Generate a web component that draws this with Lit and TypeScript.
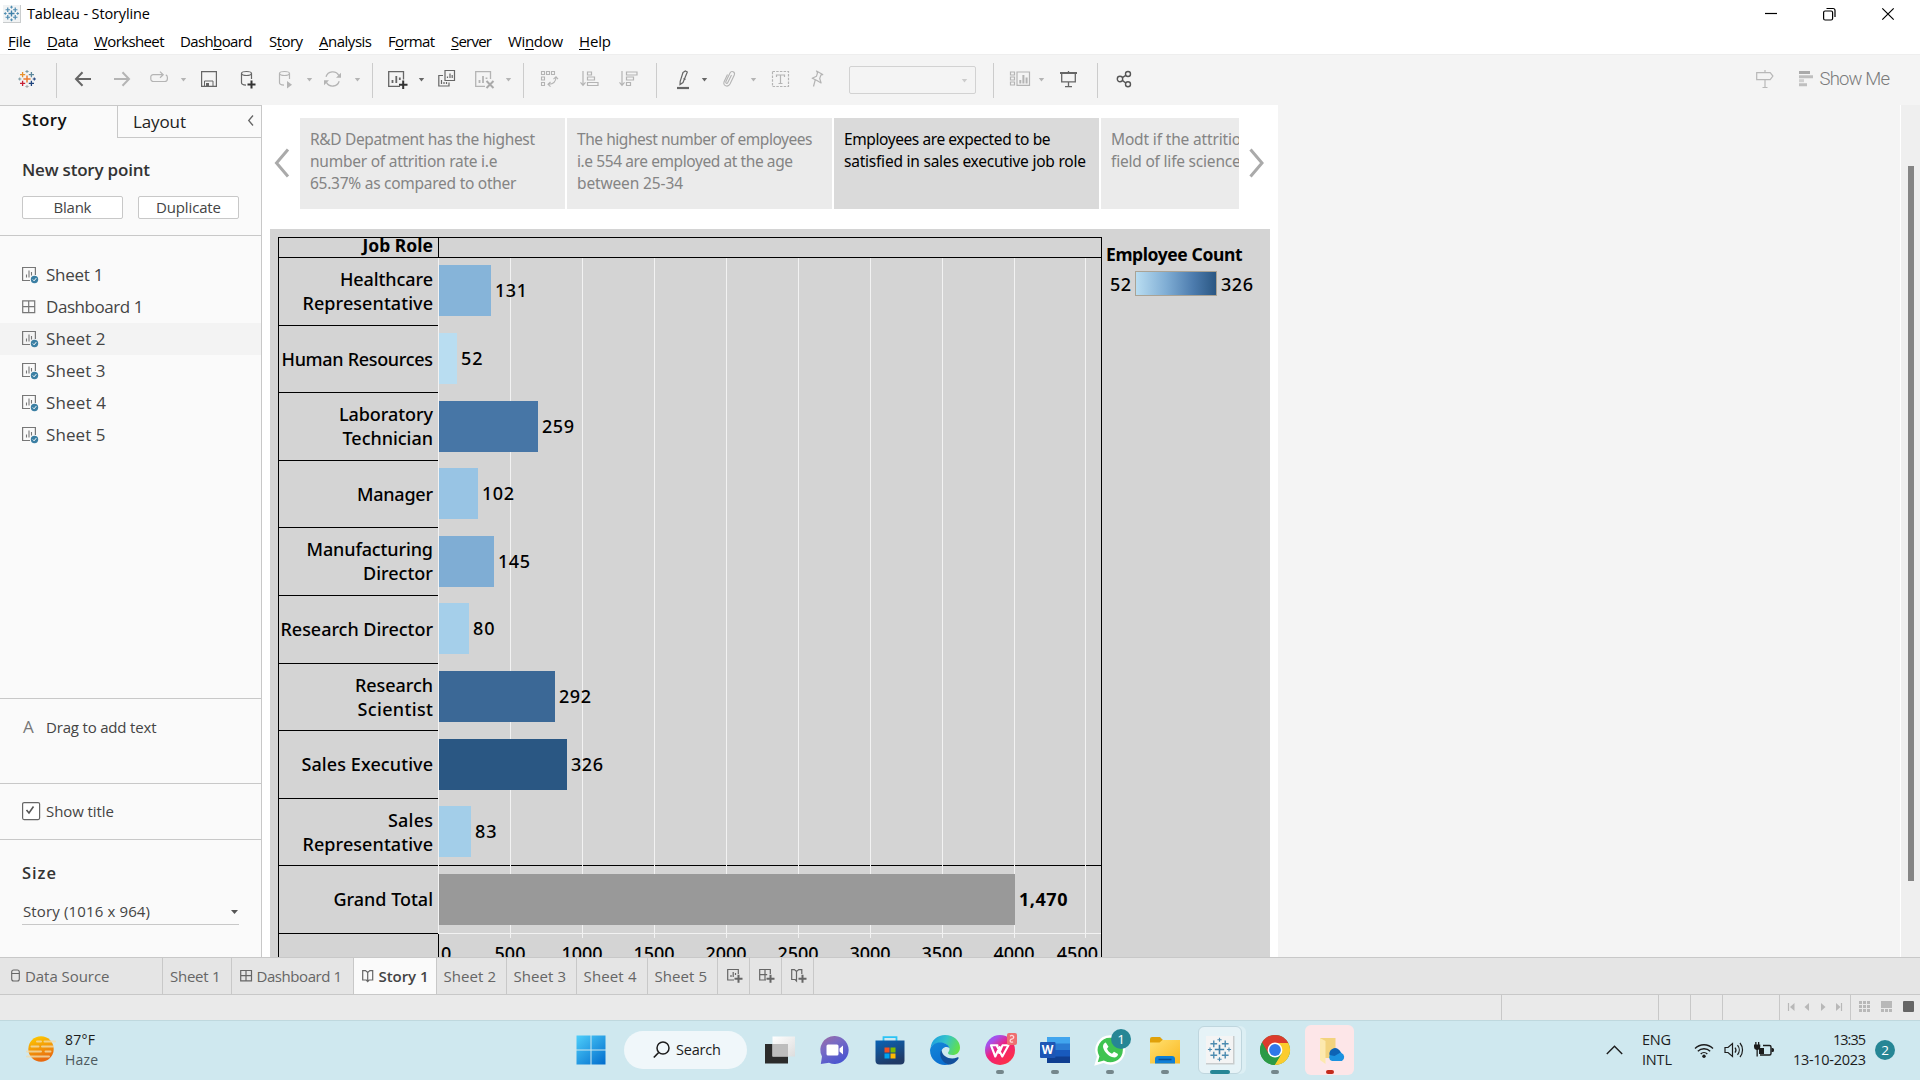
import { LitElement, html, svg, css, nothing, TemplateResult } from "lit";
import { customElement, property, query } from "lit/decorators.js";
import { classMap } from "lit/directives/class-map.js";
import { styleMap } from "lit/directives/style-map.js";

/** A single-line label whose tracking is adjusted so that it spans a given width. */
@customElement("fit-text")
class FitText extends LitElement {
  static styles = css`
    :host { display: inline-block; white-space: nowrap; flex: none; }
    .inner { display: inline-block; }
  `;
  @property({ type: Number }) w = 0;
  @query(".inner") inner!: HTMLElement;
  firstUpdated() {
    const n = (this.textContent ?? "").trim().length;
    const natural = this.inner.getBoundingClientRect().width;
    if (!this.w || n < 2) return;
    const gap = (this.w - natural) / (n - 1);
    this.inner.style.letterSpacing = `${gap}px`;
    this.inner.style.marginRight = `${-gap}px`;
  }
  render() {
    return html`<span class="inner"><slot></slot></span>`;
  }
}

const D = "#666";
const L = "#b4b4b4";

const icon = (w: number, h: number, body: unknown) =>
  html`<svg class="ic" width=${w} height=${h} viewBox="0 0 ${w} ${h}" fill="none">${body}</svg>`;

const plusAt = (x: number, y: number, r: number, c: string, sw: number) =>
  svg`<path d="M${x - r} ${y}h${2 * r}M${x} ${y - r}v${2 * r}" stroke=${c} stroke-width=${sw}/>`;

const tableauMark = (k: number, colors: string[], sw: number) => {
  const c = k / 2;
  const u = k / 20;
  return svg`
    ${plusAt(c, c, 3.6 * u, colors[0], sw * 1.15)}
    ${plusAt(c - 4.4 * u, c - 4.4 * u, 2.6 * u, colors[1], sw)}
    ${plusAt(c + 4.4 * u, c - 4.4 * u, 2.6 * u, colors[2], sw)}
    ${plusAt(c - 4.4 * u, c + 4.4 * u, 2.6 * u, colors[3], sw)}
    ${plusAt(c + 4.4 * u, c + 4.4 * u, 2.6 * u, colors[4], sw)}
    ${plusAt(c, c - 7.5 * u, 1.6 * u, colors[5], sw * 0.8)}
    ${plusAt(c, c + 7.5 * u, 1.6 * u, colors[6], sw * 0.8)}
    ${plusAt(c - 7.3 * u, c, 1.6 * u, colors[5], sw * 0.8)}
    ${plusAt(c + 7.3 * u, c, 1.6 * u, colors[4], sw * 0.8)}`;
};
const blues = ["#3f7fa8", "#4d8bb0", "#4d8bb0", "#4d8bb0", "#4d8bb0", "#4d8bb0", "#4d8bb0"];

const caret = (c: string) => icon(7, 20, svg`<path d="M.8 9h5.400L3.500 12.400z" fill=${c}/>`);
const sep = html`<span class="sep"></span>`;

const toolbar: TemplateResult[] = [
  icon(20, 20, tableauMark(20, ["#eb7b30", "#e8912c", "#5b879b", "#c72035", "#1f447e", "#7b9ba6", "#a7a9ab"], 1.3)),
  sep,
  icon(20, 20, svg`<path d="M16 10H1.500M7.500 3.200 1 10 7.500 16.800" stroke=${D} stroke-width="2"/>`),
  icon(20, 20, svg`<path d="M0 10h14.500M8.500 3.200 15 10 8.500 16.800" stroke=${L} stroke-width="2"/>`),
  icon(20, 20, svg`<path d="M12 5.7H3.300A2.400 2.400 0 0 0 .8 8.400v1.500a2.600 2.600 0 0 0 2.600 2.600h11.200a2.800 2.800 0 0 0 2.800-2.800V8.400a2.600 2.600 0 0 0-1.600-2.500M10 2.600l3.200 3.100L10 8.800" stroke=${L} stroke-width="1.200"/>`),
  caret(L),
  icon(20, 20, svg`<path d="M1.600 2.600h14.800v14.800H1.600z" stroke=${D} stroke-width="1.200"/><path d="M4.500 17v-5h8.500v5" stroke=${D}/><path d="M6 14h3v3H6z" fill=${D}/>`),
  icon(20, 20, svg`<ellipse cx="6.500" cy="4.500" rx="5" ry="2" stroke=${D} stroke-width="1.200"/><path d="M1.500 4.500v9.300c0 1.400 2 2.200 4.500 2.300M11.500 4.500V10" stroke=${D} stroke-width="1.200"/><path d="M7.500 15.500h8M11.500 11.500v8" stroke="#333" stroke-width="2"/>`),
  icon(20, 20, svg`<ellipse cx="6.500" cy="4.500" rx="5" ry="2" stroke=${L} stroke-width="1.200"/><path d="M1.500 4.500v9.300c0 1.400 2 2.200 4.500 2.300M11.500 4.500V10" stroke=${L} stroke-width="1.200"/><path d="M9 12l5 3.700-5 3.700z" fill=${L}/>`),
  caret(L),
  icon(20, 20, svg`<path d="M2 7.800A7 7 0 0 1 14.900 6.600M15.200 12.200A7 7 0 0 1 2.400 13.400" stroke=${L} stroke-width="1.300"/><path d="M17 3.800v5h-5zM0 16.200v-5h5z" fill=${L}/>`),
  caret(L),
  sep,
  icon(20, 20, svg`<path d="M12 17.400H.7V2.600h14.800v8" stroke=${D} stroke-width="1.300"/><path d="M4.500 14v-3M8.300 14V7M11.800 11V8.500" stroke=${D} stroke-width="1.800"/><path d="M11 15.700h8.500M15.200 11.500v8.500" stroke="#333" stroke-width="2"/>`),
  caret(D),
  icon(20, 20, svg`<path d="M7 1.500h9.500v10H7z" stroke=${D} stroke-width="1.200"/><path d="M9.500 9V7.500M12 9V4.500M14.200 9V6" stroke=${D} stroke-width="1.200"/><path d="M5 6.500H.8V17H11v-3.500M3.500 15v-4M6 15v-2M8.500 15v-2" stroke=${D} stroke-width="1.200"/>`),
  icon(20, 20, svg`<path d="M10 17.400H.7V2.600h14.800V10" stroke=${L} stroke-width="1.300"/><path d="M4.500 14v-3M8 14V7M11.500 10V8.500" stroke=${L} stroke-width="1.800"/><path d="M11.500 12l7 7M18.500 12l-7 7" stroke="#aaa" stroke-width="2"/>`),
  caret(L),
  sep,
  icon(20, 20, svg`<g stroke=${L} stroke-width="1.100"><path d="M1.500 2.500h3v3h-3zM6.500 2.500h3v3h-3zM11.500 2.500h3v3h-3zM1.500 8h3v3h-3zM1.500 13.500h3v3h-3zM16 8c0 5-2.500 7-7.500 7.300M13.500 10.200 16 7.700l2 2.500M10.500 13 8 15.300l2.500 2.400"/></g>`),
  icon(20, 20, svg`<g stroke=${L} stroke-width="1.200"><path d="M4 2v14M1.500 13.400 4 16.300l2.500-2.900M8.500 3h4v3h-4zM8.500 8h7v3h-7zM8.500 13.500H19v3H8.500z"/></g>`),
  icon(20, 20, svg`<g stroke=${L} stroke-width="1.200"><path d="M4 2v14M1.500 13.400 4 16.300l2.500-2.900M8.500 3H19v3H8.500zM8.500 8h7v3h-7zM8.500 13.500h4v3h-4z"/></g>`),
  sep,
  icon(20, 20, svg`<path d="M7 3.500 9.300 2l2 1-4.300 10.500-3 2 .200-3.200zM7.500 9.500l2 1" stroke=${D} stroke-width="1.200"/><path d="M1 19h12" stroke=${D} stroke-width="2.200"/>`),
  caret(D),
  icon(20, 20, svg`<path d="M9.500 6 5.800 13.500c-.7 1.500-2.500.8-2-.8L8 4c1.300-2.600 5.500-1.300 4.300 2L8 15c-2 3.700-7.500 2-5.900-2.300L5.500 5.500" stroke=${L} stroke-width="1.100"/>`),
  caret(L),
  icon(20, 20, svg`<path d="M1.500 2.500h16v15h-16z" stroke=${L} stroke-width="1.200" stroke-dasharray="2.500 1.200"/><path d="M5.500 8V6h8v2M9.500 6v8.500M7.500 14.500h4" stroke=${L} stroke-width="1.200"/>`),
  icon(20, 20, svg`<path d="M6.500 2l6.200 3.600-1.700.3-1.300 3.600 1.400 4.400L6.500 11.300l-4.300-2.100 4.300-2 1-3.400zM5.200 11 3.500 17.500" stroke=${L} stroke-width="1.200" stroke-linejoin="round"/>`),
  html`<span class="combo">${caret("#ccc")}</span>`,
  sep,
  icon(22, 20, svg`<path d="M1.500 3h4v3h-4zM1.500 8h4v3h-4zM1.500 13h4v3h-4zM8 3h12.500v13.300H8z" stroke=${L} stroke-width="1.200"/><path d="M11.300 14.500V11M14.400 14.500V6M17.600 14.500V8.500" stroke=${L} stroke-width="2"/>`),
  caret(L),
  icon(20, 20, svg`<path d="M1 4h17" stroke=${D} stroke-width="2"/><path d="M9.500 2v2M2.700 4.500v8.300h13.600V4.500M9.500 13v4.500M6 17.600h7" stroke=${D} stroke-width="1.300"/>`),
  sep,
  icon(20, 20, svg`<g stroke="#555" stroke-width="1.400"><circle cx="4" cy="10" r="2.700"/><circle cx="12" cy="5" r="2.500"/><circle cx="12" cy="15.300" r="2.500"/><path d="M6.300 8.600 9.800 6.300M6.300 11.400 9.800 14"/></g>`),
  icon(20, 20, svg`<path d="M10 1v2.500M1.700 3.700h13.500l2.700 3.400-2.700 3.500H1.700zM10 11v7.500M7.500 18.500h5" stroke="#b8b8b8" stroke-width="1.200"/>`),
  html`<span class="showme">${icon(15, 20, svg`<path d="M0 2h11v3H0z" fill="#aaa"/><path d="M0 6.200h14v3H0zM0 14.200h8v3H0z" fill="#bfbfbf"/><path d="M0 10.200h5v3H0z" fill="#d0d0d0"/>`)}<fit-text w="70.500">Show Me</fit-text></span>`,
];

const menus: [string, string, string, number][] = [
  ["", "F", "ile", 23], ["", "D", "ata", 31.500], ["", "W", "orksheet", 70.500], ["Dash", "b", "oard", 72.500],
  ["S", "t", "ory", 34], ["", "A", "nalysis", 53], ["F", "o", "rmat", 47], ["", "S", "erver", 41],
  ["Wi", "n", "dow", 55], ["", "H", "elp", 32],
];

const sheetIcon = icon(17, 20, svg`<path d="M8 15.500H.6V2.500h12.800V10" stroke="#777" stroke-width="1.200"/><path d="M4.500 12.500v-3M7 12.500V5.500M9.500 10.500V7" stroke="#777" stroke-width="1.100"/><circle cx="12.500" cy="14.500" r="3.700" fill="#3b7fa3"/><path d="M10.800 14.500l1.300 1.300 2.200-2.700" stroke="#fff"/>`);
const dashIcon = icon(17, 20, svg`<path d="M.7 3.800h12v11.800H.7zM6.700 3.800v11.800M.7 9.700h12" stroke="#777" stroke-width="1.200"/>`);

const points: { lines: [string, number][]; active?: boolean }[] = [
  { lines: [["R&D Depatment has the highest", 225], ["number of attrition rate i.e", 187.500], ["65.37% as compared to other", 206.500]] },
  { lines: [["The highest number of employees", 235.500], ["i.e 554 are employed at the age", 216], ["between 25-34", 106]] },
  { lines: [["Employees are expected to be", 206.500], ["satisfied in sales executive job role", 242]], active: true },
  { lines: [["Modt if the attrition is in the", 199], ["field of life sciences", 137]] },
];

interface Row { h: number; top: number; label: [string, number][]; value: string; vw: number; bar: number; color: string; bold?: boolean }
const rows: Row[] = [
  { h: 68, top: 7, label: [["Healthcare", 93], ["Representative", 130.500]], value: "131", vw: 32, bar: 52, color: "#86b4d9" },
  { h: 67, top: 7, label: [["Human Resources", 151.500]], value: "52", vw: 21.500, bar: 18, color: "#b9ddf1" },
  { h: 68, top: 8, label: [["Laboratory", 94], ["Technician", 90.500]], value: "259", vw: 32, bar: 99, color: "#4776a6" },
  { h: 67, top: 7, label: [["Manager", 76]], value: "102", vw: 32, bar: 39, color: "#98c4e4" },
  { h: 68, top: 8, label: [["Manufacturing", 126.500], ["Director", 70]], value: "145", vw: 32, bar: 55, color: "#7fadd4" },
  { h: 68, top: 7, label: [["Research Director", 152.500]], value: "80", vw: 21.500, bar: 30, color: "#a5cfea" },
  { h: 67, top: 7, label: [["Research", 78], ["Scientist", 75.500]], value: "292", vw: 32, bar: 116, color: "#3b6896" },
  { h: 68, top: 8, label: [["Sales Executive", 131.500]], value: "326", vw: 32, bar: 128, color: "#2a5783" },
  { h: 67, top: 7, label: [["Sales", 45], ["Representative", 130.500]], value: "83", vw: 21.500, bar: 32, color: "#a3cee9" },
  { h: 68, top: 8, label: [["Grand Total", 99.500]], value: "1,470", vw: 48.500, bar: 576, color: "#999999", bold: true },
];
const grid = [0, 72, 144, 216, 288, 360, 432, 504, 576, 647];

const bookIcon = svg`<path d="M5.700 4.500v9M5.700 13.500 4.300 12H.7V2.600h2.800l2.200 1.900 2.200-1.900h2.800V12H7.100z" stroke="#666" stroke-width="1.200"/>`;
const plus = svg`<path d="M7.500 11.800h8M11.500 7.800v8" stroke="#666" stroke-width="2"/>`;

const tabs: { icon?: TemplateResult; text?: string; w?: number; active?: boolean }[] = [
  { icon: icon(10, 16, svg`<rect x=".7" y="2" width="7.600" height="11" rx="2" stroke="#666" stroke-width="1.100"/><path d="M.7 5.500h7.600" stroke="#666"/>`), text: "Data Source", w: 84.500 },
  { text: "Sheet 1", w: 50.500 },
  { icon: icon(13, 16, svg`<path d="M.7 2.500h10.800v10.300H.7zM6 2.500v10.300M.7 7.600h10.800" stroke="#666" stroke-width="1.200"/>`), text: "Dashboard 1", w: 85.500 },
  { icon: icon(13, 16, bookIcon), text: "Story 1", w: 50, active: true },
  { text: "Sheet 2", w: 52.500 },
  { text: "Sheet 3", w: 52.500 },
  { text: "Sheet 4", w: 53 },
  { text: "Sheet 5", w: 52.500 },
  { icon: icon(16, 18, svg`<path d="M7 13H.7V2.500h10.600V7M4 10V8M6.200 10V5M8.500 8V6" stroke="#666" stroke-width="1.200"/>${plus}`) },
  { icon: icon(16, 18, svg`<path d="M7 13H.7V2.500h10.600V7M6 2.500V13M.7 7.700h7.500" stroke="#666" stroke-width="1.200"/>${plus}`) },
  { icon: icon(16, 18, svg`<path d="M5.500 4.500v9.500L4.200 12.500H.7V2.600h2.700l2.100 1.900 2.300-1.900h3V7" stroke="#666" stroke-width="1.200"/>${plus}`) },
];

const apps: { art: TemplateResult; state?: "run" | "active" | "alert"; badge?: string }[] = [
  { art: icon(30, 30, svg`<defs><linearGradient id="tv" x1="0" y1="0" x2="1" y2="1"><stop stop-color="#fff"/><stop offset="1" stop-color="#ddd"/></linearGradient></defs><path d="M0 9h23v19.500H0z" fill="#2b2b2b"/><path d="M7.500 1.500H30v20H7.500z" fill="url(#tv)"/><path d="M7.500 9H23v12.500H7.500z" fill="#bdbdbd"/>`) },
  { art: icon(30, 30, svg`<defs><linearGradient id="ch" x1="0" y1="0" x2=".6" y2="1"><stop stop-color="#a06aa0"/><stop offset=".4" stop-color="#7a6cc4"/><stop offset="1" stop-color="#4a55d0"/></linearGradient></defs><path d="M15 1a14 14 0 1 1-6 26.800L.8 29 2 21.500A14 14 0 0 1 15 1z" fill="url(#ch)"/><rect x="6.500" y="9.500" width="12" height="11" rx="1.500" fill="#fff"/><path d="M19.500 13.500l3.500-3v9l-3.500-3z" fill="#fff"/>`) },
  { art: icon(30, 30, svg`<defs><linearGradient id="st" x1="0" y1="0" x2=".4" y2="1"><stop stop-color="#0a63b5"/><stop offset="1" stop-color="#213a66"/></linearGradient></defs><path d="M8.500 7V2.200h13V7" stroke="#2cc3f5" stroke-width="1.800"/><path d="M.5 5.500h29v20a4 4 0 0 1-4 4h-21a4 4 0 0 1-4-4z" fill="url(#st)"/><path d="M9.500 12.500h5v5h-5z" fill="#f25022"/><path d="M15.500 12.500h5v5h-5z" fill="#7fba00"/><path d="M9.500 18.500h5v5h-5z" fill="#00a4ef"/><path d="M15.500 18.500h5v5h-5z" fill="#ffb900"/>`) },
  { art: icon(30, 30, svg`<defs><linearGradient id="e1" x1="0" y1=".2" x2="1" y2=".5"><stop stop-color="#1b9de2"/><stop offset=".5" stop-color="#35c4c9"/><stop offset="1" stop-color="#62e04b"/></linearGradient><linearGradient id="e2" x1="0" y1="0" x2=".5" y2="1"><stop stop-color="#1488d8"/><stop offset="1" stop-color="#0b6fd0"/></linearGradient></defs><path d="M.5 13C1.500 5 7.500 0 15 0c9 0 15 6 15 12.500 0 5-3.500 7.500-7.500 7.500-3 0-4.500-1-4.500-2 0-1.200 1.500-1.500 1.500-4C19.500 11 16 8 11 8 6 8 2 10 .5 13z" fill="url(#e1)"/><path d="M0 15C.8 10 5.500 7.500 10 7.500c5 0 9 2.500 9.500 5.500-4-2.500-8.500.5-8.500 5.500 0 6 4.500 10.500 9 10.500-8 3.500-20-2-20-14z" fill="url(#e2)"/><path d="M11.500 15c-3 4-.5 12.500 7 14.500 4 .3 8-2.500 10-6 .5-1-.5-1.500-1.500-1-6 2.500-14.500 0-15.500-7.500z" fill="#124f9c"/>`) },
  { art: icon(30, 30, svg`<defs><linearGradient id="wp" x1="0" y1="0" x2=".8" y2="1"><stop stop-color="#8a5cff"/><stop offset=".25" stop-color="#a84fe8"/><stop offset=".5" stop-color="#f01f7a"/><stop offset="1" stop-color="#ff3340"/></linearGradient></defs><circle cx="15" cy="15" r="15" fill="url(#wp)"/><path d="M12.500 10.300H6L10.300 21.500 14.600 12M11.500 10.300 17.300 21.500 23.500 10.300H17.500L14.200 18" stroke="#fff" stroke-width="2.100" stroke-linejoin="round" stroke-linecap="round"/><rect x="22" y="-2" width="10" height="12" rx="2" fill="#ee6f70"/><path d="M25 1.200c2.500-2 5 .5 3 2.300l-2 .8c-2 1.500 0 3.700 2 2.500" stroke="#ffd9d9" stroke-width="1.300"/>`), state: "run" },
  { art: icon(30, 30, svg`<path d="M7 2h23v7H7z" fill="#41a5ee"/><path d="M7 8.500h23v7H7z" fill="#2b7cd3"/><path d="M7 15h23v7H7z" fill="#185abd"/><path d="M7 21.500h23V28H7z" fill="#103f91"/><rect x="0" y="7" width="15.500" height="16" rx="1" fill="#1d56b5"/><text x="7.500" y="19.300" text-anchor="middle" class="wlogo">W</text>`), state: "run" },
  { art: icon(30, 30, svg`<path d="M15.500 1.500a13.500 13.500 0 1 1-6.700 25.200L1 29l2.200-7.500A13.500 13.500 0 0 1 15.500 1.500z" fill="#3fc351" stroke="#fff" stroke-width="2.400"/><path d="M10.800 7.500c-2 .5-3.300 3-2.500 5.500 1.500 4.500 5 8 9.700 9.300 2.500.6 5-.8 5-3.300l-4-2.200-2 2c-2.500-1-4.200-2.800-5-5l1.500-2z" fill="#fff"/>`), state: "run", badge: "1" },
  { art: icon(30, 30, svg`<defs><linearGradient id="fo" x1="0" y1="0" x2="1" y2="1"><stop stop-color="#ffe070"/><stop offset="1" stop-color="#fbb820"/></linearGradient></defs><path d="M0 4a2 2 0 0 1 2-2h8l3 3h15v8H0z" fill="#e0a10a"/><path d="M0 7.500h9.500L12.500 5H30v23.500H0z" fill="url(#fo)"/><path d="M5 28.500V24a3 3 0 0 1 3-3h14a3 3 0 0 1 3 3v4.500z" fill="#0f7fd6"/><path d="M8.500 24.500h13" stroke="#0a4f93" stroke-width="1.500"/>`), state: "run" },
  { art: icon(30, 30, svg`<path d="M1 1h28.500v28.500H1z" fill="#c9cccd"/><path d="M1 1h27v27H1z" fill="#f4f4f4"/><g transform="translate(1.500 1.500)">${tableauMark(26, blues, 1.400)}</g>`), state: "active" },
  { art: icon(30, 30, svg`<circle cx="15" cy="15" r="15" fill="#2b9a46"/><path d="M2 7.500A15 15 0 0 1 28.200 8H15l-6.300 11z" fill="#db3b2d"/><path d="M28 7.500A15 15 0 0 1 14.500 30L21.500 18.500 15 8h13.200z" fill="#fbcc2e"/><path d="M2 7.500 8.500 19A7.300 7.300 0 0 0 21.500 18.700L14.700 30A15 15 0 0 1 2 7.500z" fill="#2b9a46"/><circle cx="15" cy="15" r="7.400" fill="#fff"/><circle cx="15" cy="15" r="5.900" fill="#2f78ea"/>`), state: "run" },
  { art: icon(30, 30, svg`<path d="M5 3h15.500v20H5z" fill="#f3d37e"/><path d="M5 3l5.500 3v23L5 25z" fill="#fde9ae"/><path d="M17 26a4 4 0 0 1-.5-7.500 5.500 5.500 0 0 1 10-.5 4.500 4.500 0 0 1 .5 8z" fill="#1b92e0"/><path d="M14.500 20a5.500 5.500 0 0 1 11-2.500l-6 3.500z" fill="#0d63b5"/>`), state: "alert" },
];

@customElement("app-root")
class AppRoot extends LitElement {
  static styles = css`
    :host { display: block; width: 1920px; height: 1080px; overflow: hidden; background: #f4f4f4; color: #000;
      font-family: "Open Sans", "Noto Sans", sans-serif; font-size: 15px; line-height: 20px; }
    * { box-sizing: border-box; }
    svg { display: block; flex: none; overflow: visible; }
    .page { display: grid; grid-template-rows: 54px 51px 852px 38px 25px 60px; height: 1080px; }

    .head { background: #fff; display: grid; grid-template-rows: 29px 25px; }
    .title { display: flex; align-items: center; padding: 0 26px 1px 3px; font-size: 14.500px; }
    .title fit-text { margin-left: 6px; flex: 1; }
    .winbtns { display: flex; gap: 46px; }
    .menus { display: grid; grid-template-columns: 39px 47px 86px 89px 50px 69px 63px 57px 71px 40px; padding-left: 8px; align-items: center; font-size: 15px; padding-bottom: 1px; }
    u { text-underline-offset: 2px; text-decoration-thickness: 1px; text-decoration-skip-ink: none; }

    .toolbar { background: #f4f4f4; border-top: 1px solid #eee; padding: 0 0 2px 17px; display: grid; align-items: center; justify-items: start; font-family: Roboto, sans-serif;
      grid-template-columns: 39px 19px 39px 36px 30px 20px 40px 38px 28px 18px 30px 18px 16px 30px 20px 37px 30px 18px 17px 39px 39px 38px 20px 25px 21px 28px 21px 39px 39px 144px 16px 29px 21px 38px 19px 639px 44px 110px; }
    .sep { width: 1px; height: 35px; background: #ccc; margin-top: 2px; }
    .combo { width: 127px; height: 28px; border: 1px solid #d2d2d2; border-radius: 2px; display: flex; justify-content: flex-end; align-items: center; padding-right: 7px; margin-top: 2px; }
    .showme { display: flex; align-items: center; gap: 5.500px; color: #7b7b7b; font-size: 18.500px; font-weight: 300; }

    .body { display: grid; grid-template-columns: 262px 1016px 622px 20px; min-height: 0; overflow: hidden; }
    .side { background: #fafafa; border-right: 1px solid #c8c8c8; border-top: 1px solid #c8c8c8; color: #444; display: grid; grid-template-rows: 130px 463px 85px 56px 1fr; }
    .side > section { border-bottom: 1px solid #c8c8c8; }
    .side > section:last-child { border-bottom: 0; }
    .sidetabs { display: grid; grid-template-columns: 117px 1fr; height: 32px; }
    .st-a { padding: 4px 0 0 22px; font-size: 17px; font-weight: 600; color: #111; }
    .st-b { border-left: 1px solid #c8c8c8; border-bottom: 1px solid #c8c8c8; padding: 0 6px 0 15px; font-size: 17px; color: #222; display: flex; align-items: center; justify-content: space-between; }
    .st-b svg { margin-top: -2px; }
    .nsp { padding: 22px 0 0 22px; font-size: 17px; font-weight: 600; color: #333; }
    .btns { display: flex; gap: 15px; padding: 16px 0 0 22px; }
    .btn { width: 101px; height: 23px; border: 1px solid #c8c8c8; border-radius: 2px; background: #fff; display: flex; align-items: center; justify-content: center; font-size: 15px; padding-bottom: 1px; }
    .sheets { padding-top: 23px; }
    .sheet { height: 32px; display: flex; align-items: center; gap: 7px; padding-left: 22px; font-size: 17px; }
    .sheet.hover { background: #f3f3f3; }
    .line { display: flex; align-items: center; padding: 0 0 2px 22px; font-size: 15px; gap: 6px; }
    .line.drag { align-items: flex-start; padding-top: 18px; }
    .drag .a { width: 18px; padding-left: 1px; font-size: 17px; color: #777; }
    .size { padding: 23px 0 0 22px; }
    .size h4 { margin: 0; font-size: 16.500px; font-weight: 600; color: #333; line-height: 20px; }
    .select { width: 217px; height: 28px; margin-top: 14px; border-bottom: 1px solid #c8c8c8; display: flex; align-items: center; justify-content: space-between; font-size: 15px; padding: 1px 1px 0; }

    .story { background: #fff; padding: 13px 8px 0; display: grid; grid-template-rows: 91px 728px; row-gap: 20px; min-height: 0; overflow: hidden; font-family: "Noto Sans", sans-serif; }
    .nav { display: grid; grid-template-columns: 30px 939px 31px; align-items: center; }
    .nav > svg { justify-self: start; margin-top: -1px; }
    .points { display: flex; gap: 2px; overflow: hidden; height: 91px; }
    .point { flex: none; width: 265px; background: #ebebeb; color: #848484; padding: 10px 0 0 10px; font-size: 15.500px; line-height: 22px; display: flex; flex-direction: column; align-items: flex-start; }
    .point.on { background: #dadada; color: #000; }
    .dash { background: #d4d4d4; padding: 8px 0 0 8px; display: grid; grid-template-columns: 824px 1fr; overflow: hidden; }
    .chart { border: 1px solid #000; border-bottom: 0; height: 720px; overflow: hidden; font-size: 18px; font-weight: 500; line-height: 24px; display: grid; grid-template-rows: 20px 676px 24px; }
    .chead { display: grid; grid-template-columns: 160px 1fr; border-bottom: 1px solid #000; font-weight: 700; font-size: 17.500px; line-height: 14px; text-align: right; }
    .chead div { border-right: 1px solid #000; padding-right: 5px; height: 19px; }
    .chead div:last-child { border-right: 0; }
    .cbody { display: grid; grid-template-columns: 159px 1fr; }
    .lab { border-bottom: 1px solid #000; display: flex; flex-direction: column; justify-content: center; align-items: flex-end; padding: 0 5px 1px 0; }
    .panel { position: relative; }
    .gridlines { position: absolute; left: 0; top: 0; }
    .row { position: relative; display: flex; align-items: flex-start; padding-left: 1px; gap: 4px; }
    .bar { height: 51px; flex: none; }
    .val { line-height: 51px; }
    .val.b { font-weight: 700; }
    .axis { display: grid; grid-template-columns: 159px 36px repeat(8, 72px) 1fr; justify-items: center; line-height: 24px; padding-top: 7px; height: 24px; overflow: hidden; }
    .axis .z { justify-self: stretch; border-left: 1px solid #000; margin-top: -7px; padding: 7px 0 0 2px; }
    .axis .last { justify-self: end; padding-right: 3px; }
    .axis span { white-space: nowrap; }
    .legend { padding: 5px 0 0 4px; font-size: 18px; font-weight: 500; }
    .legend .t { font-weight: 700; font-size: 17.500px; line-height: 24px; }
    .ramp { display: flex; align-items: center; gap: 4px; padding-left: 4px; margin-top: 5px; }
    .ramp i { width: 82px; height: 25px; border: 1px solid #aaa395; background: linear-gradient(90deg, #b9ddf1, #7fadd4 38%, #4c7bad 72%, #2a5783); }
    .scroll { background: #efefef; border-left: 1px solid #fff; padding: 61px 0 0 7px; grid-column: 4; }
    .scroll i { display: block; width: 6px; height: 715px; background: #858585; }

    .tabs { background: #e5e5e5; border-top: 1px solid #c8c8c8; border-bottom: 1px solid #c8c8c8; display: grid; color: #666; font-size: 15px;
      grid-template-columns: 163px 69px 122px 83px 70px 70px 71px 70px 32px 32px 32px; }
    .tab { border-right: 1px solid #c8c8c8; display: flex; align-items: center; gap: 4px; padding: 0 0 1px 6.500px; }
    .tab:first-child { padding-left: 11px; }
    .tab:nth-child(2) { padding-left: 7px; }
    .tab:nth-child(3), .tab:nth-child(4) { padding-left: 7.500px; }
    .tab.on { background: #fafafa; font-weight: 600; color: #444; }
    .tab:nth-child(n + 9) { padding-left: 9px; }

    .status { background: #eaeaea; display: grid; grid-template-columns: 1502px 157px 32px 32px 57px 71px 69px; }
    .status > div { border-right: 1px solid #c8c8c8; display: flex; align-items: center; }
    .status > div:last-child { border: 0; }
    .status .media { gap: 9px; padding: 0 0 2px 8px; }
    .status .views { gap: 11px; padding: 0 0 2px 8px; }

    .taskbar { background: #cfe8ef; border-top: 1px solid #bfd8de; display: grid; grid-template-columns: 563px 55px 134px 605px 1fr; font-size: 14px; color: #1c1c1c; align-items: center; padding-bottom: 1px; }
    .weather { display: flex; gap: 7px; padding-left: 26px; align-items: center; }
    .weather svg { margin-top: -2px; }
    .weather .sub { color: #4d5a5e; }
    .two { display: grid; line-height: 20px; }
    .start { justify-self: center; }
    .pill { margin-left: 6px; width: 123px; height: 38px; border-radius: 19px; background: #f0f7fa; display: flex; align-items: center; gap: 6px; padding-left: 29px; font-size: 14.500px; }
    .apps { display: flex; }
    .app { width: 55px; height: 50px; position: relative; display: grid; place-items: center; }
    .tile { width: 49px; height: 50px; border-radius: 6px; display: grid; place-items: center; }
    .active .tile { background: #e6f3f7; border: 1px solid #bfd6de; width: 44px; height: 48px; box-shadow: 4px 0 0 #dceff4; }
    .alert .tile { background: #fde6e8; }
    .dot { position: absolute; bottom: 1px; left: 23.500px; width: 8px; height: 4px; border-radius: 2px; background: #74868b; }
    .active .dot { width: 20px; left: 17.500px; background: #268695; }
    .alert .dot { background: #c42b1c; }
    .badge { position: absolute; left: 29px; top: 4px; }
    .round { width: 20px; height: 20px; border-radius: 50%; background: #268695; color: #fff; font-size: 13.500px; line-height: 20px; text-align: center; }
    .wlogo { font: 700 12px "Open Sans", sans-serif; fill: #fff; }
    .tray { display: grid; grid-template-columns: 36px 52px 30px 30px 39px 73px 50px; padding-left: 249px; align-items: center; font-size: 14.500px; }
    .two.r { justify-items: end; }
    .tray .round { margin-left: 9px; }
  `;

  private header() {
    return html`<header class="head">
      <div class="title">
        ${icon(18, 18, svg`<path d="M0 0h18v18H0z" fill="#c9cccd"/><path d="M0 0h17v17H0z" fill="#f1f3f4"/>${tableauMark(17, blues, 1.200)}`)}
        <fit-text w="123">Tableau - Storyline</fit-text>
        <div class="winbtns">
          ${icon(12, 14, svg`<path d="M0 6.500h12" stroke="#000" stroke-width="1.200"/>`)}
          ${icon(13, 14, svg`<rect x=".6" y="4" width="9" height="9" rx="1.500" stroke="#000" stroke-width="1.200"/><path d="M3.500 1.500H10A2 2 0 0 1 12 3.500V10" stroke="#000" stroke-width="1.200"/>`)}
          ${icon(12, 14, svg`<path d="M.3 1.300l11.400 11.400M11.700 1.300.3 12.700" stroke="#000" stroke-width="1.200"/>`)}
        </div>
      </div>
      <nav class="menus">${menus.map(([a, k, b, w]) => html`<fit-text w=${w}>${a}<u>${k}</u>${b}</fit-text>`)}</nav>
    </header>`;
  }

  private sidebar() {
    const list: [string, number][] = [["Sheet 1", 57.500], ["Dashboard 1", 97.500], ["Sheet 2", 59.500], ["Sheet 3", 59.500], ["Sheet 4", 60], ["Sheet 5", 59.500]];
    return html`<aside class="side">
      <section>
        <div class="sidetabs">
          <div class="st-a"><fit-text w="44.500">Story</fit-text></div>
          <div class="st-b"><fit-text w="53">Layout</fit-text>${icon(8, 14, svg`<path d="M6 1.500 1.700 6.500 6 11.500" stroke="#666" stroke-width="1.300"/>`)}</div>
        </div>
        <div class="nsp"><fit-text w="128">New story point</fit-text></div>
        <div class="btns">
          <div class="btn"><fit-text w="38">Blank</fit-text></div>
          <div class="btn"><fit-text w="65">Duplicate</fit-text></div>
        </div>
      </section>
      <section class="sheets">${list.map(([t, w]) => html`
        <div class=${classMap({ sheet: true, hover: t === "Sheet 2" })}>${t.startsWith("Dash") ? dashIcon : sheetIcon}<fit-text w=${w}>${t}</fit-text></div>`)}
      </section>
      <section class="line drag"><span class="a">A</span><fit-text w="110.500">Drag to add text</fit-text></section>
      <section class="line">${icon(18, 20, svg`<rect x=".6" y="1.600" width="17" height="17" rx="1.500" fill="#fff" stroke="#666" stroke-width="1.200"/><path d="M4.500 9l2.500 3 4.500-6.500" stroke="#555" stroke-width="1.600"/>`)}<fit-text w="68">Show title</fit-text></section>
      <section class="size">
        <h4><fit-text w="34">Size</fit-text></h4>
        <div class="select"><fit-text w="127">Story (1016 x 964)</fit-text>${icon(7, 10, svg`<path d="M0 4h7L3.500 8z" fill="#555"/>`)}</div>
      </section>
    </aside>`;
  }

  private chart() {
    return html`<div class="chart">
      <div class="chead"><div><fit-text w="70.500">Job Role</fit-text></div><div></div></div>
      <div class="cbody">
        <div>${rows.map(r => html`<div class="lab" style=${styleMap({ height: r.h + "px" })}>${r.label.map(([t, w]) => html`<fit-text w=${w}>${t}</fit-text>`)}</div>`)}</div>
        <div class="panel">
          <svg class="gridlines" width="663" height="680" shape-rendering="crispEdges">
            <path d="M0 607.500h663" stroke="#000"/>
            <path d="M0 675.500h663" stroke="#f2f2f2"/>
            ${grid.map(x => svg`<path d="M${x + 0.5} 0V${x ? 680 : 676}" stroke="#f2f2f2"/>`)}
          </svg>
          ${rows.map(r => html`<div class="row" style=${styleMap({ height: r.h + "px", paddingTop: r.top + "px" })}>
            <div class="bar" style=${styleMap({ width: r.bar + "px", background: r.color })}></div>
            <div class=${classMap({ val: true, b: !!r.bold })}><fit-text w=${r.vw}>${r.value}</fit-text></div>
          </div>`)}
        </div>
      </div>
      <div class="axis">
        <span></span><span class="z">0</span>
        ${[500, 1000, 1500, 2000, 2500, 3000, 3500, 4000].map(v => html`<span>${v}</span>`)}
        <span class="last">4500</span>
      </div>
    </div>`;
  }

  private taskbar() {
    return html`<footer class="taskbar">
      <div class="weather">
        ${icon(32, 30, svg`<defs><linearGradient id="sun" x1="0" y1="0" x2=".3" y2="1"><stop stop-color="#ffd000"/><stop offset="1" stop-color="#e86a10"/></linearGradient></defs><circle cx="15" cy="15" r="12.700" fill="url(#sun)"/><path d="M11 7.500h4M18.500 7.500H29M5.500 12.500h7M16 12.500h11M1 17.500h14M19.500 17.500h5M1 22.500h22" stroke="#f0dcae" stroke-width="2" stroke-linecap="round" opacity=".8"/>`)}
        <div class="two"><fit-text w="30">87°F</fit-text><fit-text class="sub" w="33">Haze</fit-text></div>
      </div>
      <div class="start">${icon(30, 30, svg`<defs><linearGradient id="win" gradientUnits="userSpaceOnUse" x1="0" y1="0" x2="26" y2="30"><stop stop-color="#4fd0fb"/><stop offset="1" stop-color="#0571cf"/></linearGradient></defs><path d="M.5.500h14v14H.5zM15.500.500h14v14h-14zM.5 15.500h14v14H.5zM15.500 15.500h14v14h-14z" fill="url(#win)"/>`)}</div>
      <div class="pill">${icon(17, 18, svg`<circle cx="10" cy="7" r="6" stroke="#1c1c1c" stroke-width="1.500"/><path d="M5.700 11.500.8 16.500" stroke="#1c1c1c" stroke-width="1.700"/>`)}<fit-text w="45">Search</fit-text></div>
      <div class="apps">${apps.map(a => html`
        <div class=${classMap({ app: true, active: a.state === "active", alert: a.state === "alert" })}>
          <div class="tile">${a.art}</div>
          ${a.state ? html`<span class="dot"></span>` : nothing}
          ${a.badge ? html`<span class="round badge">${a.badge}</span>` : nothing}
        </div>`)}
      </div>
      <div class="tray">
        ${icon(17, 10, svg`<path d="M.8 9 8.500 1.300 16.200 9" stroke="#1c1c1c" stroke-width="1.400"/>`)}
        <div class="two"><fit-text w="29">ENG</fit-text><fit-text w="30">INTL</fit-text></div>
        ${icon(20, 16, svg`<path d="M1 6.500a12.700 12.700 0 0 1 18 0M3.800 9.300a8.800 8.800 0 0 1 12.400 0M6.700 12a4.700 4.700 0 0 1 6.600 0" stroke="#1c1c1c" stroke-width="1.300"/><circle cx="10" cy="14.200" r="1.700" fill="#1c1c1c"/>`)}
        ${icon(20, 16, svg`<path d="M1 5.500h3L8.500 1.500v13L4 10.500H1z" stroke="#1c1c1c" stroke-width="1.200"/><path d="M11 5.500a4 4 0 0 1 0 5M13.500 3.200a7.500 7.500 0 0 1 0 9.600M16 1a11 11 0 0 1 0 14" stroke="#1c1c1c" stroke-width="1.200"/>`)}
        ${icon(20, 16, svg`<path d="M9 3.500h6.500A1.500 1.500 0 0 1 17 5v6.500a1.500 1.500 0 0 1-1.500 1.500H6" stroke="#1c1c1c" stroke-width="1.400"/><path d="M17.500 6h1A1.500 1.500 0 0 1 20 7.500v1A1.500 1.500 0 0 1 18.500 10h-1zM5 6h5v6H5zM0 2.500h1.200V0h1.300v2.500h1.500V0h1.300v2.500h1V5A3 3 0 0 1 3.800 8v6.500H2.500V8A3 3 0 0 1 0 5z" fill="#1c1c1c"/>`)}
        <div class="two r"><fit-text w="33">13:35</fit-text><fit-text w="73">13-10-2023</fit-text></div>
        <span class="round">2</span>
      </div>
    </footer>`;
  }

  render() {
    return html`<div class="page">
      ${this.header()}
      <div class="toolbar">${toolbar}</div>
      <main class="body">
        ${this.sidebar()}
        <section class="story">
          <div class="nav">
            ${icon(20, 30, svg`<path d="M18 1.500 6.500 15 18 28.500" stroke="#aaa" stroke-width="3"/>`)}
            <div class="points">${points.map(p => html`<div class=${classMap({ point: true, on: !!p.active })}>${p.lines.map(([t, w]) => html`<fit-text w=${w}>${t}</fit-text>`)}</div>`)}</div>
            ${icon(30, 30, svg`<path d="M11.500 1.500 23 15 11.500 28.500" stroke="#aaa" stroke-width="3"/>`)}
          </div>
          <div class="dash">
            ${this.chart()}
            <div class="legend">
              <div class="t"><fit-text w="136.500">Employee Count</fit-text></div>
              <div class="ramp"><fit-text w="21">52</fit-text><i></i><fit-text w="32">326</fit-text></div>
            </div>
          </div>
        </section>
        <div class="scroll"><i></i></div>
      </main>
      <nav class="tabs">${tabs.map(t => html`<div class=${classMap({ tab: true, on: !!t.active })}>${t.icon ?? nothing}${t.text ? html`<fit-text w=${t.w!}>${t.text}</fit-text>` : nothing}</div>`)}</nav>
      <div class="status">
        <div></div><div></div><div></div><div></div><div></div>
        <div class="media">
          ${icon(7, 8, svg`<path d="M.5 0v8" stroke="#b8b8b8" stroke-width="1.200"/><path d="M6.500 0v8L2 4z" fill="#b8b8b8"/>`)}
          ${icon(7, 8, svg`<path d="M5 0v8L.5 4z" fill="#b8b8b8"/>`)}
          ${icon(7, 8, svg`<path d="M1 0v8l4.500-4z" fill="#b8b8b8"/>`)}
          ${icon(7, 8, svg`<path d="M5.500 0v8" stroke="#b8b8b8" stroke-width="1.200"/><path d="M0 0v8l4.500-4z" fill="#b8b8b8"/>`)}
        </div>
        <div class="views">
          ${icon(11, 11, svg`<path d="M0 0h3v3H0zM4 0h3v3H4zM8 0h3v3H8zM0 4h3v3H0zM4 4h3v3H4zM8 4h3v3H8zM0 8h3v3H0zM4 8h3v3H4zM8 8h3v3H8z" fill="#b8b8b8"/>`)}
          ${icon(11, 11, svg`<path d="M0 0h11v7H0zM0 8h3v3H0zM4 8h3v3H4zM8 8h3v3H8z" fill="#b8b8b8"/>`)}
          ${icon(11, 11, svg`<rect width="11" height="11" rx="1" fill="#666"/>`)}
        </div>
      </div>
      ${this.taskbar()}
    </div>`;
  }
}
